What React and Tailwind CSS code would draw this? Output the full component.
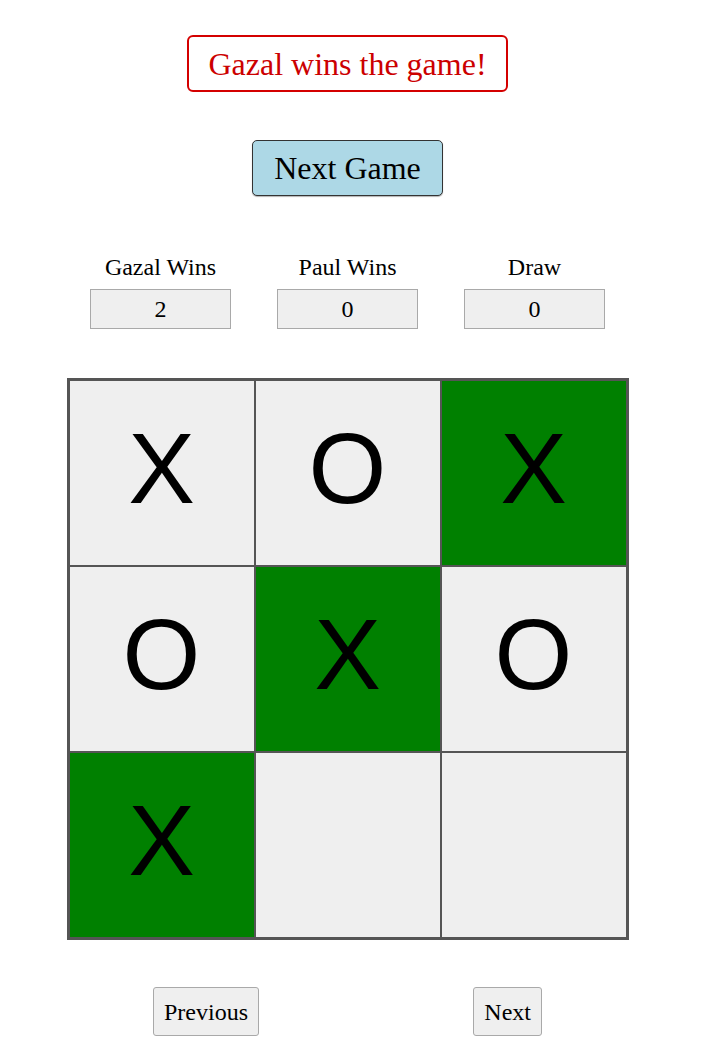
import React from 'react';

const board = ['X', 'O', 'X', 'O', 'X', 'O', 'X', '', ''];
const winning = [2, 4, 6];

const scores = [
    { label: 'Gazal Wins', value: 2 },
    { label: 'Paul Wins', value: 0 },
    { label: 'Draw', value: 0 },
];

export default function App() {
    return (
        <div className="w-[695px] flex flex-col items-center bg-white text-black font-['Liberation_Serif',serif]">
            {/* status */}
            <div className="mt-[35px] h-[57px] px-[19px] flex items-center border-2 border-[#d40000] rounded-[6px] text-[#cc0000] text-[32px] leading-none">
                Gazal wins the game!
            </div>

            <button className="mt-[48px] h-[56px] px-[21px] bg-[#add8e6] border border-[#333] rounded-[5px] text-[32px] leading-none shadow-[0_1px_1px_rgba(0,0,0,0.3)]">
                Next Game
            </button>

            {/* scores */}
            <div className="mt-[57px] flex">
                {scores.map((s) => (
                    <div key={s.label} className="w-[187px] flex flex-col items-center">
                        <div className="h-[28px] text-[24px] leading-[28px]">{s.label}</div>
                        <div className="mt-[8px] w-[141px] h-[40px] flex items-center justify-center bg-[#efefef] border border-[#a9a9a9] text-[24px]">
                            {s.value}
                        </div>
                    </div>
                ))}
            </div>

            {/* board */}
            <div className="mt-[49px] grid grid-cols-3 border-2 border-[#555]">
                {board.map((v, i) => (
                    <div
                        key={i}
                        className={`w-[186px] h-[186px] pb-[10px] flex items-center justify-center border border-[#555] font-['Liberation_Sans',Arial,sans-serif] text-[100px] leading-none ${winning.includes(i) ? 'bg-[#008000]' : 'bg-[#efefef]'}`}
                    >
                        {v}
                    </div>
                ))}
            </div>

            {/* history nav */}
            <div className="mt-[47px] w-[389px] flex justify-between">
                <button className="h-[49px] px-[10px] bg-[#efefef] border border-[#a9a9a9] rounded-[3px] text-[24px] leading-none">
                    Previous
                </button>
                <button className="h-[49px] px-[10px] bg-[#efefef] border border-[#a9a9a9] rounded-[3px] text-[24px] leading-none">
                    Next
                </button>
            </div>
        </div>
    );
}
